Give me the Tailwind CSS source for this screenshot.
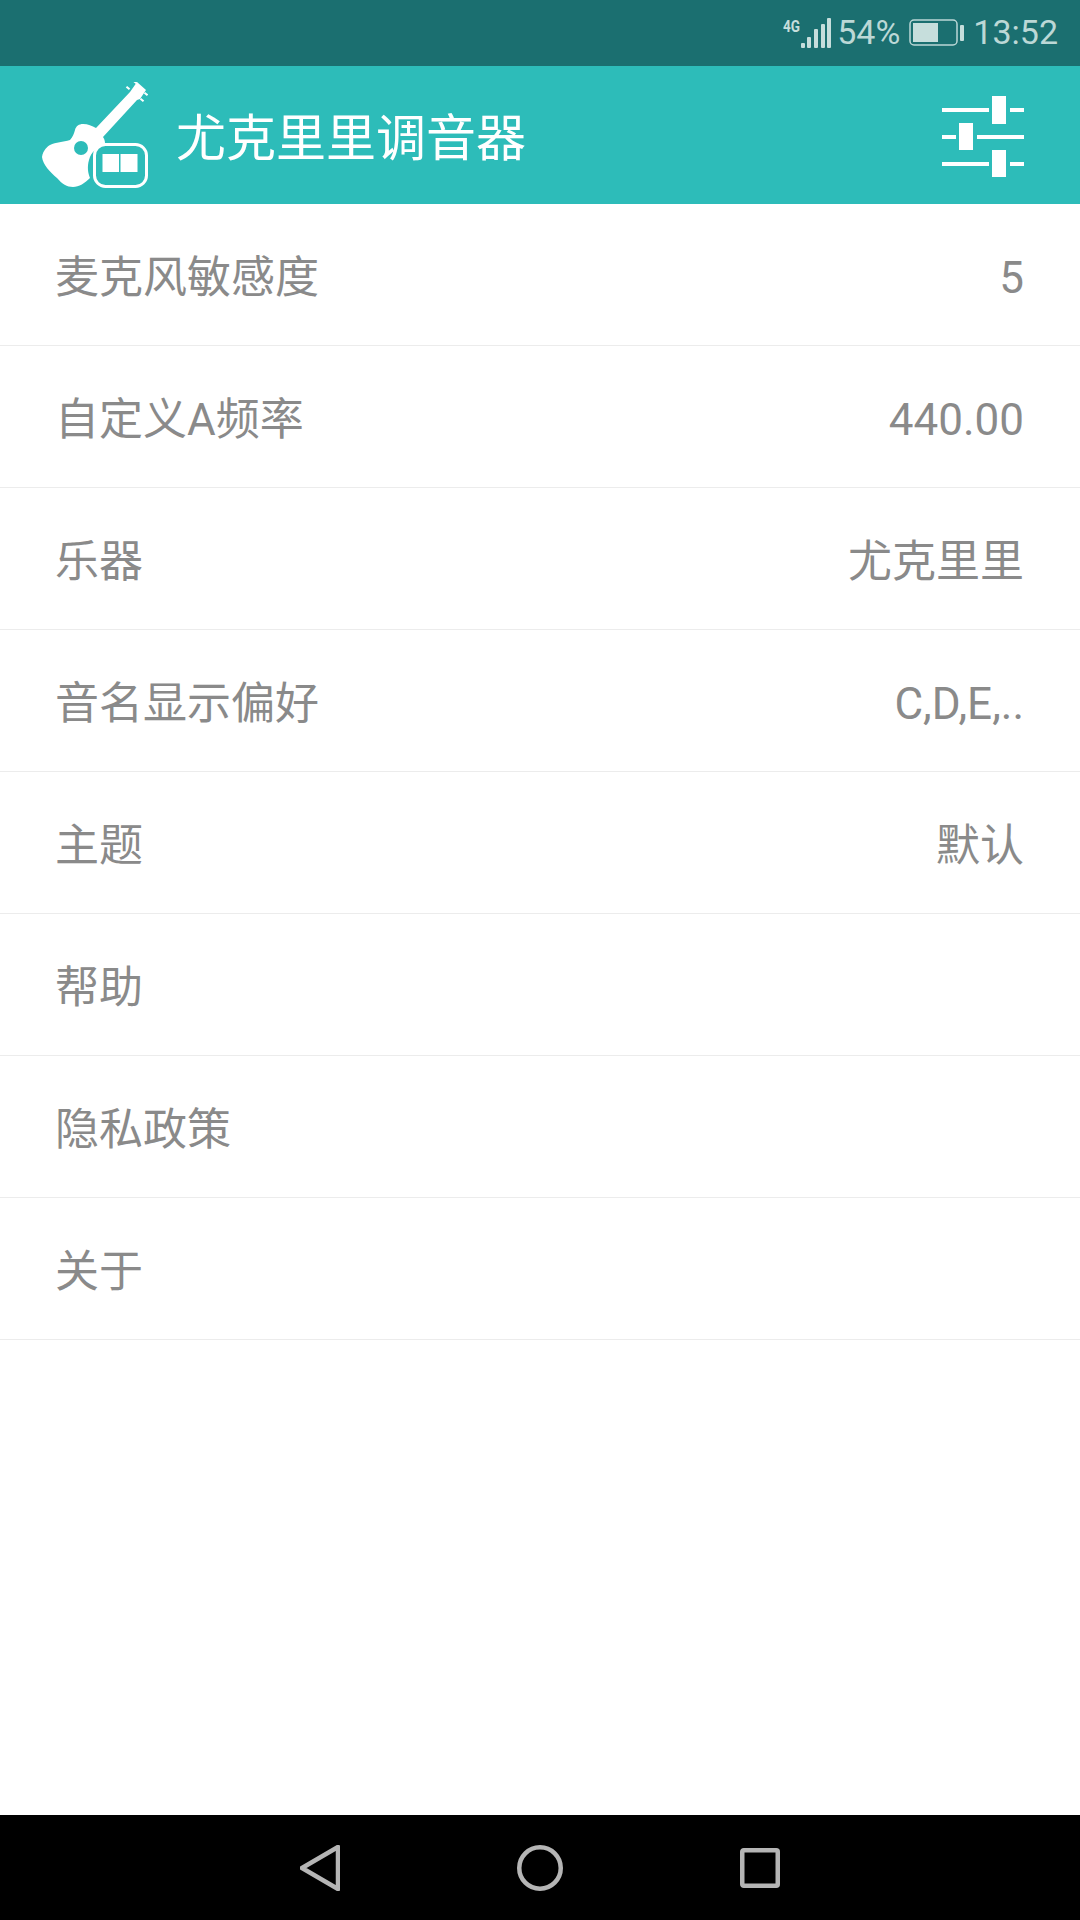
<!DOCTYPE html>
<html lang="zh"><head><meta charset="utf-8">
<script src="https://cdn.jsdelivr.net/npm/@tailwindcss/browser@4"></script>
</head>
<body class="m-0 bg-white">
<div class="w-[1080px] h-[1920px] flex flex-col bg-white font-['Roboto','Noto_Sans_CJK_SC',sans-serif] overflow-hidden">
  <div class="h-[66px] bg-[#1b6f70] flex items-center justify-end pr-[22px] text-[#bcd8d6] text-[34px] shrink-0">
    <svg width="50" height="32" viewBox="783 16 50 32" class="mr-[5px]" fill="#c6dedc">
      <text x="784" y="31" font-size="16" font-weight="700" font-family="Roboto" textLength="17" lengthAdjust="spacingAndGlyphs">4G</text>
      <rect x="802" y="42" width="4" height="5" rx="1"/><rect x="808" y="36" width="4" height="11" rx="1"/><rect x="815" y="28" width="4" height="19" rx="1"/><rect x="822" y="23" width="4" height="24" rx="1"/><rect x="828" y="17" width="4" height="30" rx="1"/>
    </svg>
    <span class="pb-[2px]">54%</span>
    <svg width="58" height="28" viewBox="0 0 58 28" class="ml-[9px] mr-[6px]">
      <rect x="1" y="1" width="47" height="25" rx="4" fill="none" stroke="#bcd8d6" stroke-width="1.500"/>
      <rect x="4" y="4" width="25" height="19" fill="#c6dedc"/>
      <rect x="51" y="6" width="4" height="16" rx="1" fill="#c6dedc"/>
    </svg>
    <span class="pb-[2px]">13:52</span>
  </div>
  <header class="h-[138px] bg-[#2dbcb9] flex items-center pl-[42px] pr-[56px] shrink-0">
    <svg width="106" height="106" viewBox="42 82 106 106" class="mr-[28px]">
      <path fill="#fff" d="M137 82 L146 90 L140 99 L137 100 L103 137 C105 140 105 142 105 144 C97 147 91 152 89 160 C87 167 88 173 90 178 C85 183 79 187 73 187 C67 187 62 184 57 178 C50 172 43 165 42 157 C43 150 48 146 50 145 C56 142 63 142 70 140 C73 137 74 133 75 130 C76 126 79 124 83 124 C88 124 92 126 96 128 L130 92 Z"/>
      <circle cx="81" cy="148" r="7" fill="#2dbcb9"/>
      <rect x="126" y="87" width="4" height="2" transform="rotate(40 128 88)" fill="#fff"/><rect x="133" y="81" width="4" height="2" transform="rotate(40 135 82)" fill="#fff"/><rect x="140" y="99" width="4" height="2" transform="rotate(40 142 100)" fill="#fff"/><rect x="144" y="93" width="4" height="2" transform="rotate(40 146 94)" fill="#fff"/>
      <rect x="94.500" y="144.500" width="52" height="42" rx="11" fill="#2dbcb9" stroke="#fff" stroke-width="3"/>
      <rect x="102.500" y="154" width="35" height="18" fill="#fff"/>
      <rect x="119" y="154" width="1.500" height="18" fill="#2dbcb9"/>
    </svg>
    <h1 class="text-[50px] font-normal text-white leading-none flex-1 pt-[8px]">尤克里里调音器</h1>
    <svg width="82" height="82" viewBox="942 96 82 82" fill="#fff" class="mt-[3px]">
      <rect x="942" y="108" width="47" height="4"/><rect x="992" y="96" width="14" height="28"/><rect x="1010" y="108" width="14" height="4"/>
      <rect x="942" y="135" width="14" height="4"/><rect x="959" y="123" width="14" height="27"/><rect x="977" y="135" width="47" height="4"/>
      <rect x="942" y="162" width="47" height="4"/><rect x="992" y="150" width="14" height="27"/><rect x="1010" y="162" width="14" height="4"/>
    </svg>
  </header>
  <main class="flex-1 text-[#8a8a8a] text-[44px]">
    <div class="h-[142px] border-b border-[#ececec] flex items-center justify-between pl-[55px] pr-[56px] pt-[6px]"><span>麦克风敏感度</span><span>5</span></div>
    <div class="h-[142px] border-b border-[#ececec] flex items-center justify-between pl-[55px] pr-[56px] pt-[6px]"><span>自定义A频率</span><span>440.00</span></div>
    <div class="h-[142px] border-b border-[#ececec] flex items-center justify-between pl-[55px] pr-[56px] pt-[6px]"><span>乐器</span><span>尤克里里</span></div>
    <div class="h-[142px] border-b border-[#ececec] flex items-center justify-between pl-[55px] pr-[56px] pt-[6px]"><span>音名显示偏好</span><span>C,D,E,..</span></div>
    <div class="h-[142px] border-b border-[#ececec] flex items-center justify-between pl-[55px] pr-[56px] pt-[6px]"><span>主题</span><span>默认</span></div>
    <div class="h-[142px] border-b border-[#ececec] flex items-center justify-between pl-[55px] pr-[56px] pt-[6px]"><span>帮助</span></div>
    <div class="h-[142px] border-b border-[#ececec] flex items-center justify-between pl-[55px] pr-[56px] pt-[6px]"><span>隐私政策</span></div>
    <div class="h-[142px] border-b border-[#ececec] flex items-center justify-between pl-[55px] pr-[56px] pt-[6px]"><span>关于</span></div>
  </main>
  <nav class="h-[105px] bg-black shrink-0 flex items-center pl-[300px] pr-[300px] justify-between">
    <svg width="40" height="46" viewBox="0 0 40 46" fill="none" stroke="#b5b5b5" stroke-width="4.500" stroke-linejoin="round"><path d="M2 23 L38 2 V44 Z"/></svg>
    <svg width="46" height="46" viewBox="0 0 46 46" fill="none" stroke="#b5b5b5" stroke-width="4.500"><circle cx="23" cy="23" r="20.750"/></svg>
    <svg width="40" height="40" viewBox="0 0 40 40" fill="none" stroke="#b5b5b5" stroke-width="4.500" stroke-linejoin="round"><rect x="2.250" y="2.250" width="35.500" height="35.500" rx="1.500"/></svg>
  </nav>
</div>
</body></html>
